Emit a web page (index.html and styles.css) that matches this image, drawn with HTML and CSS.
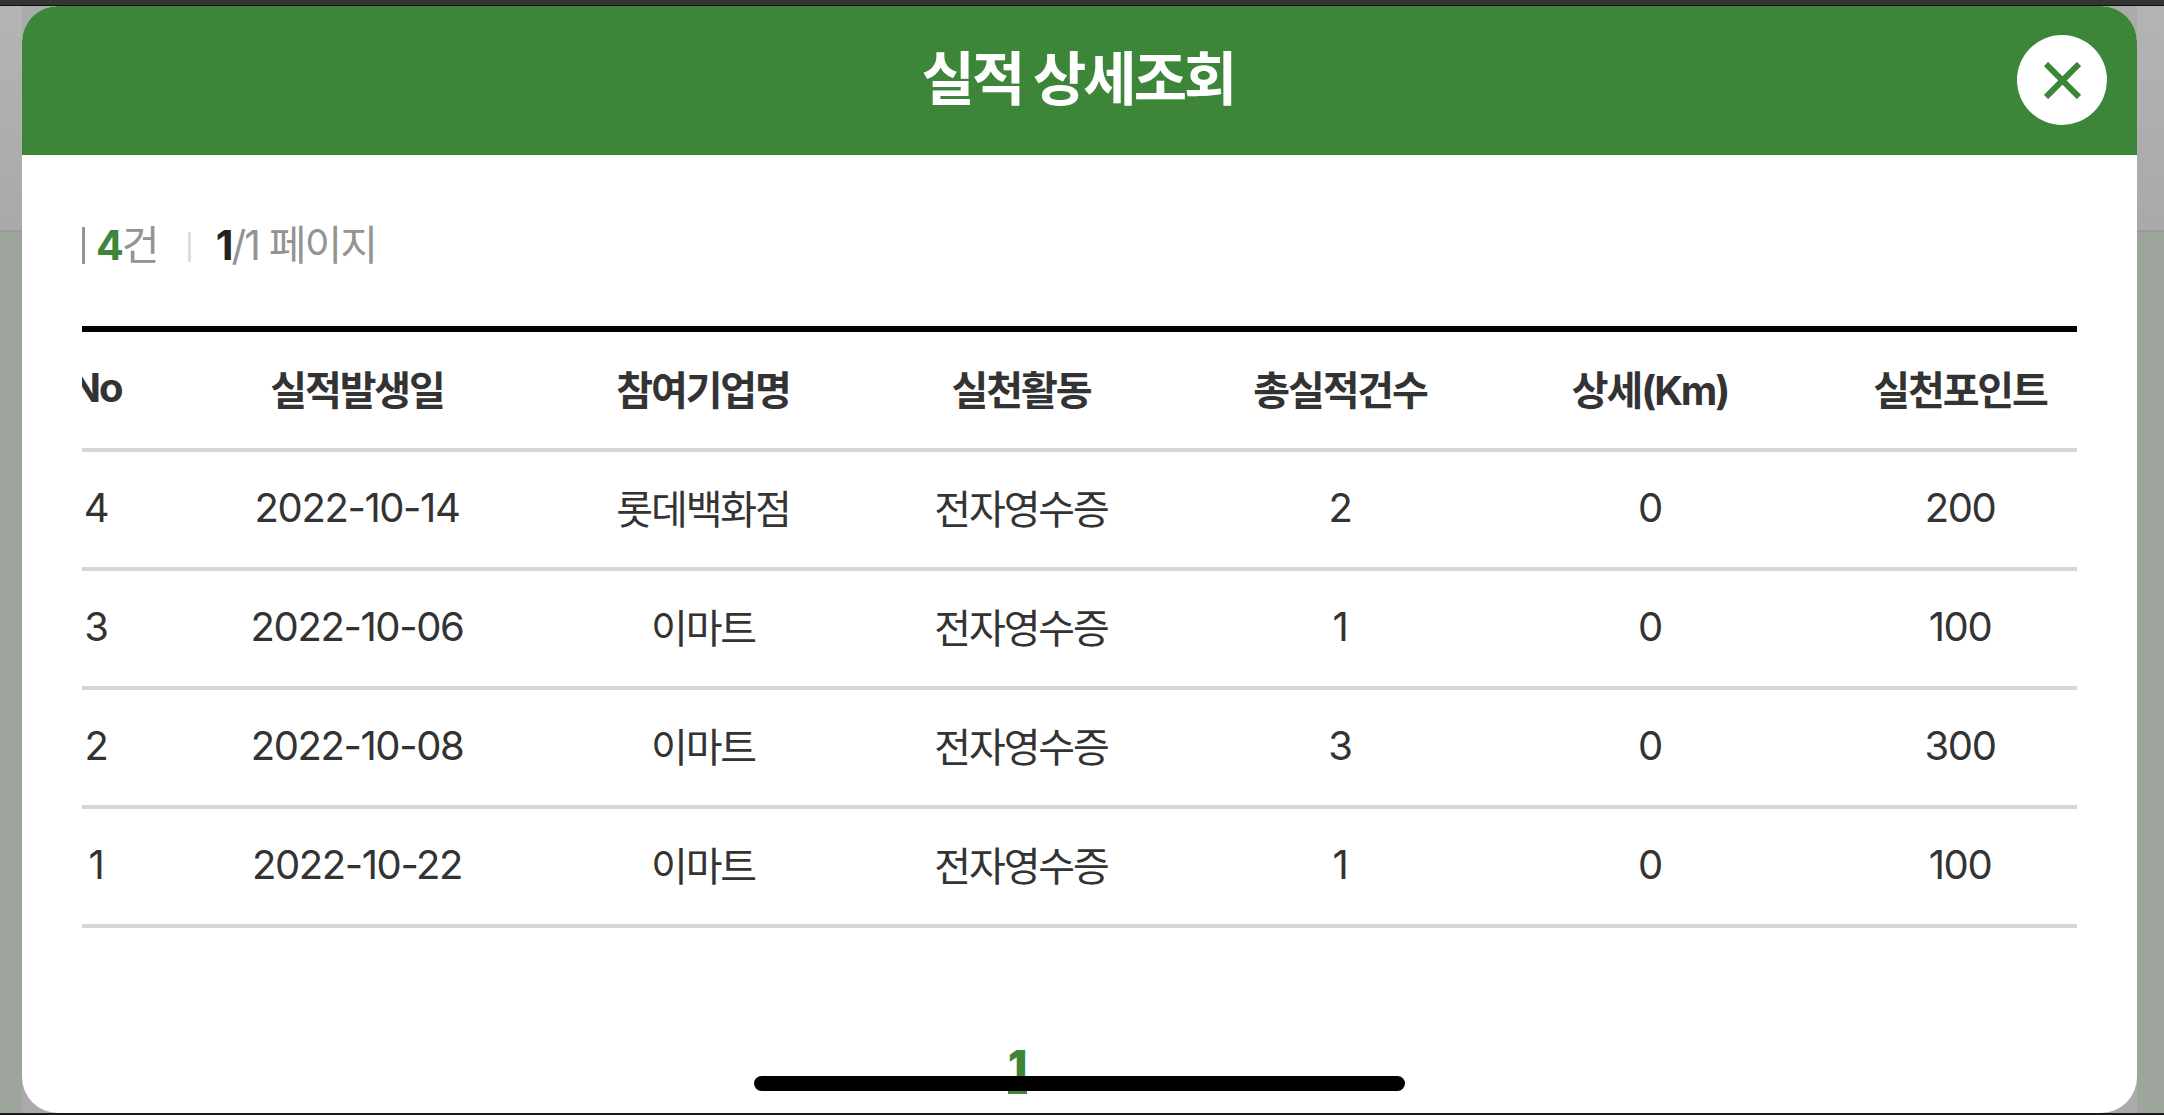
FILE: index.html
```html
<!DOCTYPE html>
<html lang="ko">
<head>
    <meta charset="UTF-8">
    <meta name="viewport" content="width=device-width, initial-scale=1.0">
    <title>실적 상세조회</title>
    <link rel="stylesheet" href="styles.css">
</head>
<body>
    <div class="status-line"></div>

    <div class="backdrop">
        <div class="modal-shade">
            <div class="modal">
                <div class="modal-header">
                    <h2 class="modal-title">실적 상세조회</h2>
                    <button class="close-button" aria-label="닫기">
                        <svg width="37" height="37" viewBox="0 0 37 37">
                            <path d="M2 2 L35 35 M35 2 L2 35" stroke="#3d8539" stroke-width="6" fill="none"/>
                        </svg>
                    </button>
                </div>

                <div class="modal-body">
                    <div class="summary">
                        <span class="summary-total"><b class="count">4</b>건</span>
                        <span class="summary-page"><b class="current">1</b>/1 페이지</span>
                    </div>

                    <div class="table-wrap">
                        <table class="result-table">
                            <colgroup>
                                <col class="col-no">
                                <col class="col-date">
                                <col class="col-company">
                                <col class="col-activity">
                                <col class="col-wide">
                                <col class="col-wide">
                                <col class="col-wide">
                            </colgroup>
                            <thead>
                                <tr>
                                    <th>No</th>
                                    <th>실적발생일</th>
                                    <th>참여기업명</th>
                                    <th>실천활동</th>
                                    <th>총실적건수</th>
                                    <th>상세(Km)</th>
                                    <th>실천포인트</th>
                                </tr>
                            </thead>
                            <tbody>
                                <tr>
                                    <td>4</td>
                                    <td>2022-10-14</td>
                                    <td class="ko">롯데백화점</td>
                                    <td class="ko">전자영수증</td>
                                    <td>2</td>
                                    <td>0</td>
                                    <td>200</td>
                                </tr>
                                <tr>
                                    <td>3</td>
                                    <td>2022-10-06</td>
                                    <td class="ko">이마트</td>
                                    <td class="ko">전자영수증</td>
                                    <td>1</td>
                                    <td>0</td>
                                    <td>100</td>
                                </tr>
                                <tr>
                                    <td>2</td>
                                    <td>2022-10-08</td>
                                    <td class="ko">이마트</td>
                                    <td class="ko">전자영수증</td>
                                    <td>3</td>
                                    <td>0</td>
                                    <td>300</td>
                                </tr>
                                <tr>
                                    <td>1</td>
                                    <td>2022-10-22</td>
                                    <td class="ko">이마트</td>
                                    <td class="ko">전자영수증</td>
                                    <td>1</td>
                                    <td>0</td>
                                    <td>100</td>
                                </tr>
                            </tbody>
                        </table>
                    </div>

                    <div class="pagination">
                        <a class="page-number">1</a>
                    </div>
                </div>

                <div class="home-indicator"></div>
            </div>
        </div>
    </div>

    <div class="bottom-line"></div>
</body>
</html>
```

FILE: styles.css
```css
* {
    margin: 0;
    padding: 0;
    box-sizing: border-box;
    font-family: Inter, "Noto Sans CJK KR", sans-serif;
}

html, body {
    height: 100%;
    overflow: hidden;
}

body {
    display: flex;
    flex-direction: column;
    background-color: #9ea59c;
}

.status-line {
    height: 6px;
    flex-shrink: 0;
    background-color: #343434;
    border-bottom: 1px solid #111;
}

.bottom-line {
    height: 2px;
    flex-shrink: 0;
    background-color: #1a1a1a;
}

.backdrop {
    flex: 1;
    min-height: 0;
    padding: 0 27px 0 22px;
    background:
        linear-gradient(#b4b4b4, #a9a9a9 224px, #999 224px, #999 226px, transparent 226px),
        #9ea59c;
}

.modal-shade {
    height: 100%;
    background-color: #aaa;
}

.modal {
    position: relative;
    height: 100%;
    background-color: white;
    border-radius: 36px;
    overflow: hidden;
}

.modal-header {
    height: 149px;
    padding: 0 3px 12px 0;
    display: flex;
    justify-content: center;
    align-items: center;
    position: relative;
    background-color: #3d8539;
}

.modal-title {
    font-size: 58px;
    font-weight: 700;
    letter-spacing: -3px;
    color: white;
}

.close-button {
    position: absolute;
    top: 29px;
    right: 30px;
    width: 90px;
    height: 90px;
    border: none;
    border-radius: 50%;
    background-color: white;
    display: flex;
    justify-content: center;
    align-items: center;
}

.modal-body {
    padding: 0 60px;
}

.summary {
    height: 171px;
    padding-top: 72px;
    display: flex;
    align-items: flex-start;
    font-size: 41px;
    letter-spacing: -1.9px;
    color: #939393;
}

.summary-total {
    padding-left: 11px;
    border-left: 3px solid #939393;
    height: 37px;
    line-height: 37px;
}

.summary-page {
    height: 37px;
    line-height: 37px;
    margin-left: 30px;
    padding-left: 28px;
    position: relative;
}

/* 건수와 페이지 사이 구분선 */
.summary-page::before {
    content: "";
    position: absolute;
    left: 0;
    top: 5px;
    width: 3px;
    height: 30px;
    background-color: #ddd;
}

.count {
    color: #3d8539;
}

.current {
    color: #222;
}

.table-wrap {
    overflow: hidden;
    border-top: 6px solid black;
}

.result-table {
    margin-left: -55px;
    width: 2088px;
    table-layout: fixed;
    border-collapse: collapse;
    color: #333;
}

.col-no { width: 138px; }
.col-date { width: 384px; }
.col-company { width: 308px; }
.col-activity { width: 328px; }
.col-wide { width: 310px; }

.result-table th,
.result-table td {
    height: 119px;
    padding-bottom: 5px;
    text-align: center;
    font-size: 40px;
    letter-spacing: -1.4px;
    border-bottom: 4px solid #d6d6d6;
}

.result-table th {
    height: 118px;
    font-weight: 700;
    letter-spacing: -2.1px;
}

.result-table td.ko {
    letter-spacing: -2.1px;
}

.pagination {
    margin-top: 112px;
    padding-right: 124px;
    display: flex;
    justify-content: center;
}

.page-number {
    font-size: 42px;
    font-weight: 900;
    color: #3d8539;
    border-bottom: 3px solid #3d8539;
}

.home-indicator {
    position: absolute;
    left: 732px;
    bottom: 22px;
    width: 651px;
    height: 15px;
    border-radius: 8px;
    background-color: black;
}
```
